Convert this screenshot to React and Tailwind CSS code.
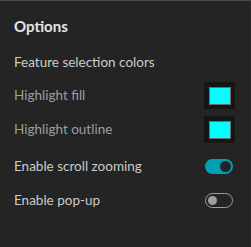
import React, { useState } from "react";

function Swatch() {
  return (
    <div className="w-[31px] h-[27px] bg-[#151515] flex items-center justify-center">
      <div className="w-[22px] h-[18px] bg-[#00ffff] border border-[#6b6b6b]" />
    </div>
  );
}

function Toggle({ on, onChange }) {
  return (
    <button
      onClick={() => onChange(!on)}
      className={
        on
          ? "w-[28px] h-[15px] rounded-full bg-[#00a0b4] flex items-center justify-end px-[2px]"
          : "w-[28px] h-[15px] rounded-full border border-[#9e9e9e] flex items-center justify-start px-[2px]"
      }
    >
      <span
        className={
          on
            ? "block w-[11px] h-[11px] rounded-full bg-[#242424]"
            : "block w-[9px] h-[9px] rounded-full bg-[#9e9e9e]"
        }
      />
    </button>
  );
}

export default function App() {
  const [scroll, setScroll] = useState(true);
  const [popup, setPopup] = useState(false);

  return (
    <div
      className="w-[251px] h-[247px] bg-[#242424] border-t border-[#4a4a4a] border-r border-r-[#2b2b2b] text-[13.5px] text-[#cbcbcb] px-[14px] pt-[15px]"
      style={{ fontFamily: "Lato, 'Open Sans', sans-serif" }}
    >
      <h2 className="text-[15px] font-bold text-[#e6e6e6] leading-[20px]">Options</h2>
      <div className="mt-[16px] leading-[20px]">Feature selection colors</div>
      <div className="mt-[10px] flex items-center justify-between pr-[1px]">
        <span className="text-[#9e9e9e]">Highlight fill</span>
        <Swatch />
      </div>
      <div className="mt-[7px] flex items-center justify-between pr-[1px]">
        <span className="text-[#9e9e9e]">Highlight outline</span>
        <Swatch />
      </div>
      <div className="mt-[13px] h-[21px] flex items-center justify-between pr-[3px]">
        <span>Enable scroll zooming</span>
        <Toggle on={scroll} onChange={setScroll} />
      </div>
      <div className="mt-[13px] h-[21px] flex items-center justify-between pr-[3px]">
        <span>Enable pop-up</span>
        <Toggle on={popup} onChange={setPopup} />
      </div>
    </div>
  );
}
